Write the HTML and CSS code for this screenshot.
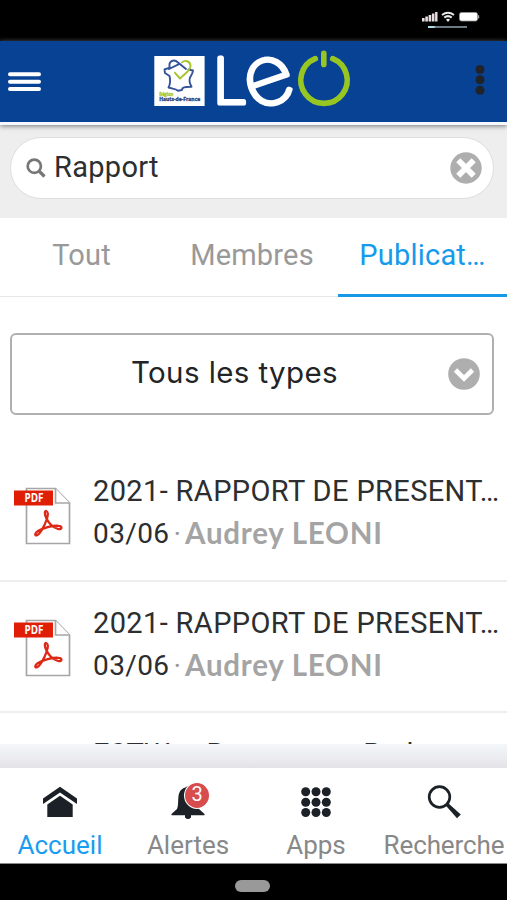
FILE: index.html
```html
<!DOCTYPE html>
<html lang="fr">
<head>
<meta charset="utf-8">
<title>LEO</title>
<link rel="stylesheet" href="styles.css">
</head>
<body>
<svg class="defs" width="0" height="0">
  <symbol id="pdf" viewBox="0 0 58 60">
    <path d="M12.500 2.500H41.500L55.500 17V57.500H12.500Z" fill="#fff" stroke="#a6a6a6" stroke-width="1.700"/>
    <path d="M41.500 2.500V17H55.500" fill="#fff" stroke="#a6a6a6" stroke-width="1.700"/>
    <rect x="0" y="4.500" width="39" height="15" fill="#e01e06"/>
    <text x="10.500" y="16.200" textLength="19" lengthAdjust="spacingAndGlyphs" class="pdf-label">PDF</text>
    <path d="M32.500 25.200C30.500 24.200 30.300 28 32 31.500C34.500 37 39 41.500 44 43C48.500 44 48.500 40 44.500 39.800C38 39.300 29 42 24 45C20.500 47.200 20.500 50 23 49.300C26 48 30.500 40 32.500 34C34 29.500 34.500 26 32.500 25.200Z" fill="none" stroke="#dc2815" stroke-width="2.300"/>
  </symbol>
</svg>
<div class="status">
  <div class="signals">
    <svg width="58" height="12" viewBox="0 0 58 12">
      <g fill="#e8dfe2"><rect x="0" y="7" width="2.600" height="3.500"/><rect x="3.300" y="5.500" width="2.600" height="5"/><rect x="6.600" y="4" width="2.600" height="6.500"/><rect x="9.900" y="2.500" width="2.600" height="8"/><rect x="13.100" y="1" width="2.400" height="9.500"/></g>
      <path d="M20 4Q26 -.5 32 4M22.300 6.600Q26 3.700 29.700 6.600" fill="none" stroke="#e9e9e9" stroke-width="2"/>
      <path d="M24 8.500Q26 7 28 8.500L26 11Z" fill="#eee"/>
      <rect x="37.500" y="1.500" width="18" height="8.500" rx="2" fill="#fff" stroke="#999" stroke-width=".8"/>
      <path d="M56.600 4.200V7.500" stroke="#aaa" stroke-width="1.200"/>
    </svg>
    <div class="meter"></div>
  </div>
</div>
<header class="header">
  <svg class="burger" width="34" height="20" viewBox="0 0 34 20"><path d="M2 2.300H31M2 9.800H31M2 17.100H31" stroke="#fff" stroke-width="4" stroke-linecap="round"/></svg>
  <svg class="logo" width="200" height="64" viewBox="150 48 200 64">
    <rect x="154.300" y="56" width="50.300" height="50" fill="#fff"/>
    <g fill="none" stroke-width="1.900" stroke-linecap="round" stroke-linejoin="round">
      <path d="M170 68.500C167.500 61 174 58.500 178 62.500L186 69M169 67.800L164.500 69.500L165 73L169.500 76C170.500 80 171 83 168.500 87.500C173 89 175.500 88.500 178 90.800L182 90C182 87 185 87 191.500 86.800C189.500 83 189 80 190 77.500C191.500 75 193 73 193 70.500L188.500 69.500M179 64.200L169 69" stroke="#34539b"/>
      <path d="M182 62.500C184.500 59.500 190.500 61 190.500 66C190.500 71 184 74 180 78.500L175 72.800" stroke="#a4c52b"/>
    </g>
    <text x="159.200" y="95.700" textLength="14" lengthAdjust="spacingAndGlyphs" class="region green">Région</text>
    <text x="159.200" y="101" textLength="41" lengthAdjust="spacingAndGlyphs" class="region">Hauts-de-France</text>
    <text x="213" y="103.200" class="wordmark letter-l">L</text>
    <text x="0" y="22.500" text-anchor="middle" class="wordmark letter-e" transform="translate(268.700 81) rotate(-19) scale(1.090 1.020)">e</text>
    <path d="M315.300 58.700A23.200 23.200 0 1 0 332.700 58.700" fill="none" stroke="#97c522" stroke-width="5.600" stroke-linecap="round"/>
    <path d="M323.800 53.400V64.400" stroke="#97c522" stroke-width="5.600" stroke-linecap="round"/>
  </svg>
  <svg class="more" width="10" height="30" viewBox="0 0 10 30" fill="#20242a"><circle cx="5" cy="4.500" r="4.500"/><circle cx="5" cy="14.800" r="4.500"/><circle cx="5" cy="25.200" r="4.500"/></svg>
</header>
<section class="search">
  <div class="field">
    <svg width="20" height="20" viewBox="0 0 20 20"><circle cx="8.300" cy="8.200" r="6.600" fill="none" stroke="#777" stroke-width="2.700"/><path d="M13 13L18.500 18.500" stroke="#777" stroke-width="3.200"/></svg>
    <span class="query">Rapport</span>
    <svg width="32" height="32" viewBox="0 0 32 32"><circle cx="16" cy="16" r="15.700" fill="#aeaeae"/><path d="M8.300 8.300L23.700 23.700M23.700 8.300L8.300 23.700" stroke="#fff" stroke-width="5.800"/></svg>
  </div>
</section>
<nav class="tabs">
  <div class="tab"><span>Tout</span></div>
  <div class="tab members"><span>Membres</span></div>
  <div class="tab active"><span>Publicat…</span></div>
</nav>
<main class="content">
  <div class="select">
    <span>Tous les types</span>
    <svg width="32" height="32" viewBox="0 0 32 32"><circle cx="16" cy="16" r="15.800" fill="#aeaeae"/><path d="M7.500 12L16 20.500L24.500 12" fill="none" stroke="#fff" stroke-width="4.600"/></svg>
  </div>
  <article class="item">
    <svg class="pdf"><use href="#pdf"/></svg>
    <div class="text"><div class="title">2021- RAPPORT DE PRESENT…</div><div class="meta"><span class="date">03/06</span><span class="dot">·</span><span class="author">Audrey LEONI</span></div></div>
  </article>
  <article class="item">
    <svg class="pdf"><use href="#pdf"/></svg>
    <div class="text"><div class="title">2021- RAPPORT DE PRESENT…</div><div class="meta"><span class="date">03/06</span><span class="dot">·</span><span class="author">Audrey LEONI</span></div></div>
  </article>
  <article class="item last">
    <div class="text"><div class="title">ESTWs - Rapport sur Bud…</div></div>
  </article>
</main>
<div class="shade"></div>
<nav class="bottom">
  <div class="entry current">
    <svg width="36" height="34" viewBox="0 0 36 34" fill="#1c2127"><path d="M1 12.500L18 .8L35 12.500V18L18 6.500L1 18Z"/><path d="M5.300 18.500L18 9.800L30.700 18.500V31H5.300Z"/></svg>
    <span>Accueil</span>
  </div>
  <div class="entry">
    <div class="bell">
      <svg width="36" height="34" viewBox="0 0 36 34" fill="#1c2127"><path d="M15.500 1.500Q18-1 20.500 1.500C28 4 26 17 29 23L34.500 28V29.300H21V31.500Q18 34.500 15 31.500V29.300H1.500V28L7 23C10 17 5 4 15.500 1.500Z"/></svg>
      <b class="badge">3</b>
    </div>
    <span>Alertes</span>
  </div>
  <div class="entry">
    <svg width="36" height="34" viewBox="0 0 36 34" fill="#1c2127"><circle cx="7.700" cy="5.700" r="4.500"/><circle cx="18" cy="5.700" r="4.500"/><circle cx="28.300" cy="5.700" r="4.500"/><circle cx="7.700" cy="16.200" r="4.500"/><circle cx="18" cy="16.200" r="4.500"/><circle cx="28.300" cy="16.200" r="4.500"/><circle cx="7.700" cy="26.500" r="4.500"/><circle cx="18" cy="26.500" r="4.500"/><circle cx="28.300" cy="26.500" r="4.500"/></svg>
    <span>Apps</span>
  </div>
  <div class="entry find">
    <svg width="36" height="34" viewBox="0 0 36 34"><circle cx="13.500" cy="11" r="10.300" fill="none" stroke="#1c2127" stroke-width="2.700"/><path d="M19.500 19.300L22 17L34.800 28.500L31 32.200Z" fill="#1c2127"/></svg>
    <span>Recherche</span>
  </div>
</nav>
<footer class="system"><div class="pill"></div></footer>
</body>
</html>
```
FILE: styles.css
```css
* { box-sizing: border-box; }
html, body { height: 900px; overflow: hidden; }
body {
  margin: 0;
  width: 507px;
  display: flex;
  flex-direction: column;
  background: #fff;
  color: #2c2e30;
  font: 29px/36px Roboto, "Liberation Sans", sans-serif;
  white-space: nowrap;
}
svg { display: block; flex: none; overflow: visible; }
.defs { height: 0; }
.status { height: 41px; flex: none; background: #000; display: flex; justify-content: flex-end; padding: 11px 27px 0 0; }
.meter { width: 39px; height: 2px; margin: 3px 0 0 6px; background: linear-gradient(90deg, #a9dce9 0 15%, #6d7b85 20%); }
.header {
  height: 84px; flex: none; display: flex; align-items: flex-start;
  background: #074294; border-bottom: 3px solid #f5f8fc;
  padding: 7px 22px 0 8px; z-index: 1; box-shadow: 0 1px 5px #777;
}
.burger { margin: 24px 108px 0 0; }
.more { margin: 17px 0 0 auto; }
.pdf-label { font: bold 11.5px "Open Sans", sans-serif; fill: #fff; }
.region { font: bold 5px "Open Sans", sans-serif; fill: #263f7b; stroke: #263f7b; stroke-width: .3; }
.green { fill: #a0c32b; stroke: #a0c32b; }
.wordmark { fill: #fff; stroke: #fff; stroke-linejoin: round; font-family: Inter, sans-serif; font-weight: 100; }
.letter-l { font-size: 61px; stroke-width: 5.2px; }
.letter-e { font-size: 80px; stroke-width: 4.3px; }
.search { height: 93px; flex: none; background: #eee; padding: 12px 13px 0 10px; }
.field {
  height: 62px; border: 1px solid #dedede; border-radius: 31px; background: #fff;
  display: flex; align-items: center; padding: 0 11px 0 15px;
}
.query { flex: 1; margin: -2px 0 0 8px; letter-spacing: .3px; }
.tabs { height: 79px; flex: none; display: grid; grid-template-columns: repeat(3, 1fr); border-bottom: 1px solid #e7e7e7; }
.tab { text-align: center; padding: 19px 0 0; color: #999; height: 79px; letter-spacing: .2px; }
.tab:first-child { padding-right: 6px; }
.members { padding-right: 3px; }
.tab.active { color: #159bec; border-bottom: 3px solid #1598e5; }
.content { height: 447px; flex: none; overflow: hidden; padding-top: 36px; }
.select {
  margin: 0 13px 0 10px; height: 82px; border: 2px solid #b0b0b0; border-radius: 6px;
  display: flex; align-items: center; padding: 0 12px; color: #222426;
  font-family: Inter, sans-serif; font-size: 29.5px; letter-spacing: .4px;
}
.select span { flex: 1; text-align: center; padding: 0 3px 5px 0; }
.item { height: 131.500px; border-bottom: 2px solid #eee; display: flex; padding: 23px 0 0 14px; }
.select + .item { margin-top: 35px; }
.pdf { width: 58px; height: 60px; margin: 13px 21px 0 0; }
.title { height: 43px; letter-spacing: .37px; }
.meta { display: flex; height: 43px; }
.date { font-size: 28px; letter-spacing: .4px; }
.dot { color: #999; margin: 0 3px 0 4px; }
.author { color: #a4a4a4; font: bold 29.5px/34px Lato, sans-serif; letter-spacing: .75px; margin-left: 1px; }
.last { padding: 23px 0 0 93px; border: 0; }
.last .title { letter-spacing: -.1px; }
.shade { height: 24px; flex: none; background: linear-gradient(#f3f7fa, #ebebf0 60%, #e4e2e7); }
.bottom { height: 96px; flex: none; display: grid; grid-template-columns: 120px 136px 120px 131px; border-bottom: 1px solid #888; font-size: 26px; line-height: 32px; color: #888; }
.entry { display: flex; flex-direction: column; align-items: center; padding-top: 18px; }
.entry > span { margin-top: 9px; }
.find { padding-left: 5px; }
.find span { letter-spacing: -.1px; }
.current { color: #189df0; }
.bell { position: relative; }
.badge {
  position: absolute; left: 15px; top: -3px; width: 24px; height: 25px; border-radius: 50%;
  background: #d74c4c; box-shadow: 0 0 0 1px #fff; color: #fff; font-size: 20px; font-weight: 400; line-height: 22px; text-align: center;
}
.system { height: 36px; flex: none; background: #000; padding: 16px 0 0 235px; }
.pill { width: 35px; height: 12px; border-radius: 6px; background: #999; }
```
